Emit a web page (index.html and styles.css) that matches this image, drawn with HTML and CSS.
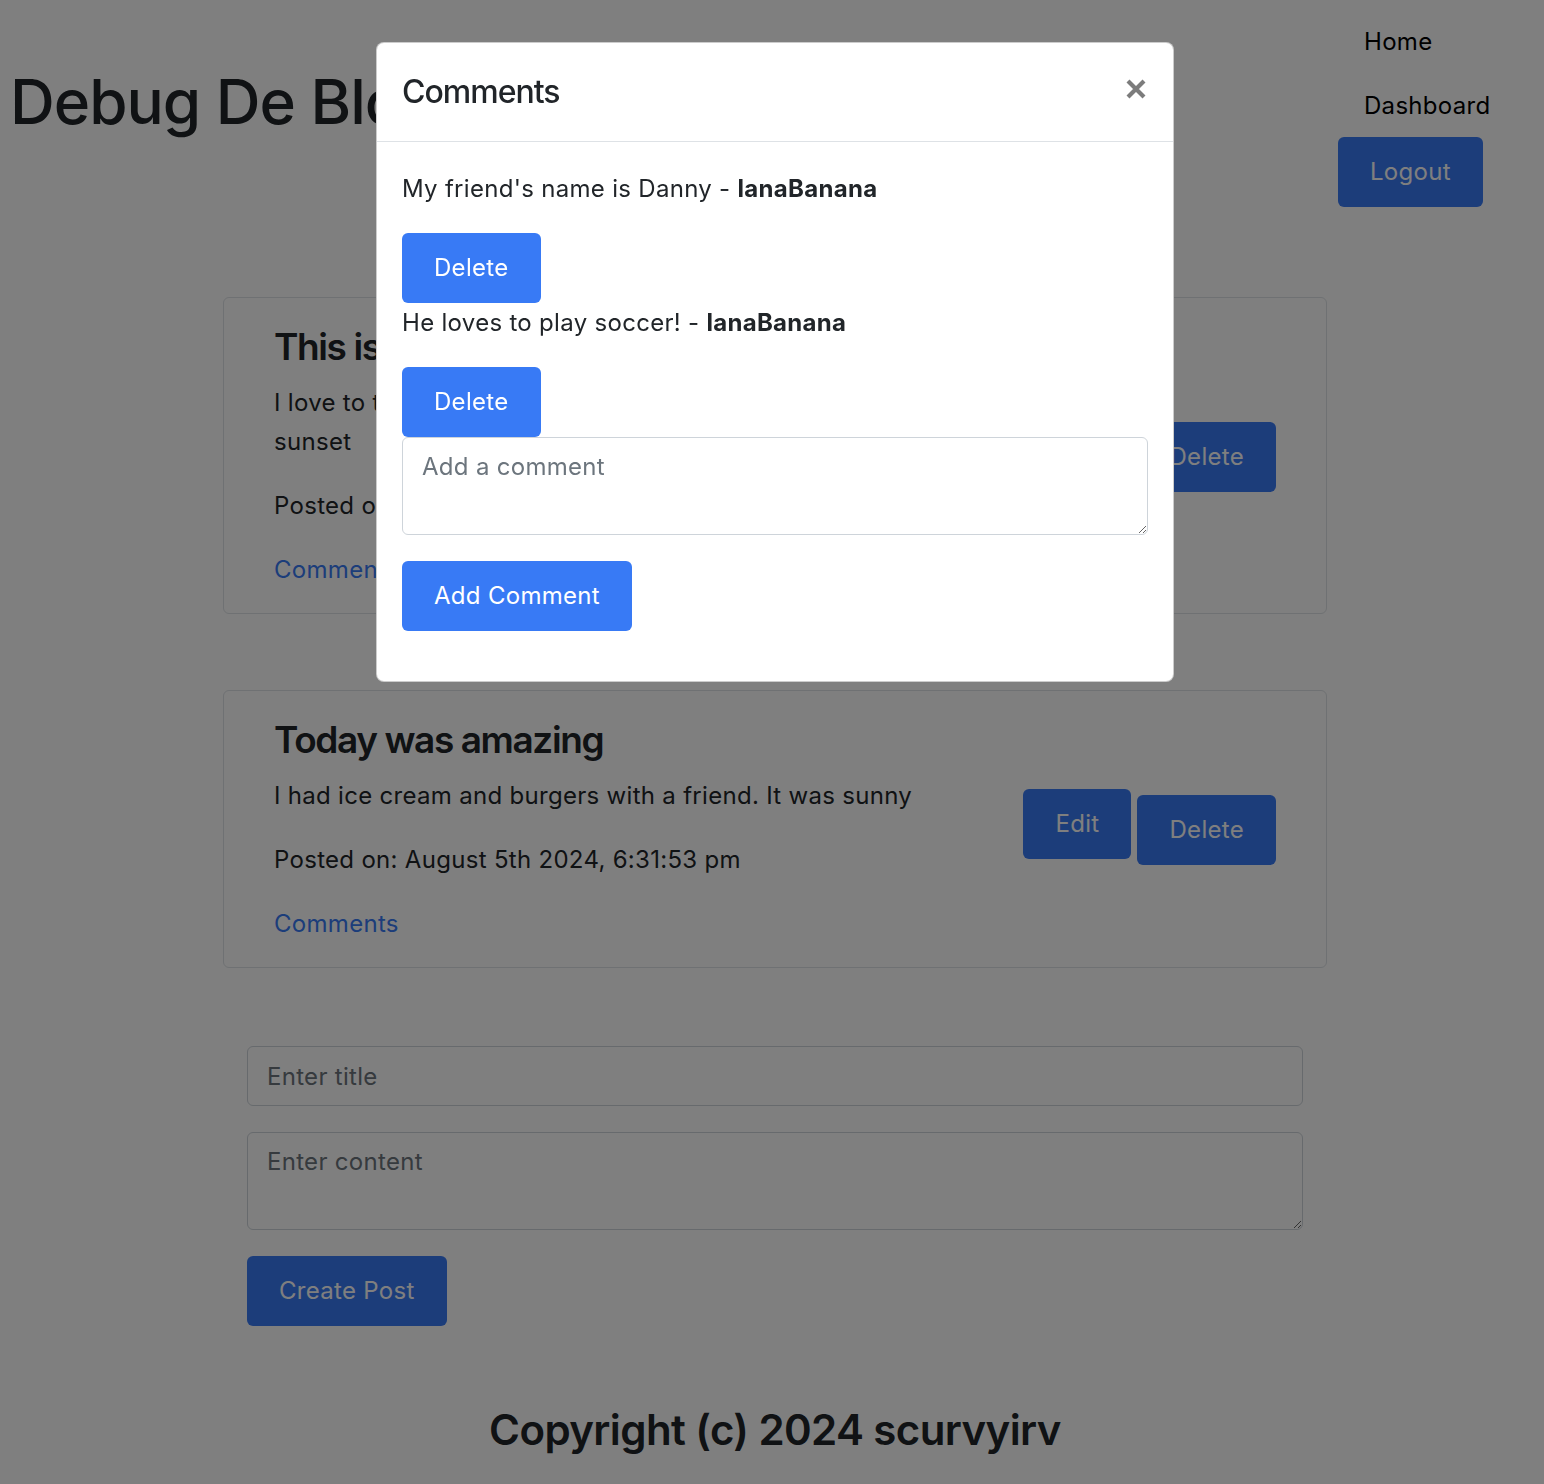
FILE: index.html
```html
<!DOCTYPE html>
<html lang="en">
<head>
<meta charset="utf-8">
<title>Debug De Blog</title>
<link rel="stylesheet" href="styles.css">
</head>
<body>
<div class="page">
  <header class="site-header">
    <h1 class="brand">Debug De Blog</h1>
    <nav class="nav">
      <a class="nav-link" href="#">Home</a>
      <a class="nav-link" href="#">Dashboard</a>
      <button class="btn">Logout</button>
    </nav>
  </header>

  <main class="main">
    <article class="post-card">
      <div class="post-body">
        <h2 class="post-title">This is my first post</h2>
        <p class="post-text">I love to take walks on the beach and watch the<br>sunset</p>
        <p class="post-text">Posted on: August 5th 2024, 6:25:10 pm</p>
        <a class="post-link" href="#">Comments</a>
      </div>
      <div class="post-actions">
        <button class="btn btn-edit">Edit</button>
        <button class="btn">Delete</button>
      </div>
    </article>

    <article class="post-card">
      <div class="post-body">
        <h2 class="post-title">Today was amazing</h2>
        <p class="post-text">I had ice cream and burgers with a friend. It was sunny</p>
        <p class="post-text">Posted on: August 5th 2024, 6:31:53 pm</p>
        <a class="post-link" href="#">Comments</a>
      </div>
      <div class="post-actions">
        <button class="btn btn-edit">Edit</button>
        <button class="btn">Delete</button>
      </div>
    </article>

    <form class="new-post">
      <input class="field" type="text" placeholder="Enter title">
      <textarea class="field field-area" placeholder="Enter content"></textarea>
      <button class="btn" type="button">Create Post</button>
    </form>
  </main>

  <footer class="site-footer">Copyright (c) 2024 scurvyirv</footer>
</div>

<div class="backdrop"></div>

<div class="modal-wrap">
  <div class="modal">
    <div class="modal-header">
      <h5 class="modal-title">Comments</h5>
      <button class="close" type="button" aria-label="Close">
        <svg width="20" height="20" viewBox="0 0 20 20"><path d="M2 2 L18 18 M18 2 L2 18" stroke="currentColor" stroke-width="4.2" fill="none"/></svg>
      </button>
    </div>
    <div class="modal-body">
      <p class="comment">My friend's name is Danny - <strong>lanaBanana</strong></p>
      <button class="btn">Delete</button>
      <p class="comment">He loves to play soccer! - <strong>lanaBanana</strong></p>
      <button class="btn">Delete</button>
      <form class="comment-form">
        <textarea class="field field-area" placeholder="Add a comment"></textarea>
        <button class="btn" type="button">Add Comment</button>
      </form>
    </div>
  </div>
</div>
</body>
</html>
```

FILE: styles.css
```css
* { box-sizing: border-box; }

html, body {
  margin: 0;
  padding: 0;
}

body {
  font-family: Inter, "Noto Sans", sans-serif;
  font-size: 24px;
  line-height: 39px;
  letter-spacing: 0.3px;
  color: #212529;
  background: #fff;
  overflow: hidden;
}

.page {
  padding-left: 6px;
}

/* header */
.site-header {
  display: flex;
  justify-content: space-between;
  align-items: flex-start;
  height: 207px;
}

.brand {
  margin: 64px 0 0 4px;
  font-size: 62px;
  line-height: 75px;
  font-weight: 500;
  letter-spacing: -1px;
  white-space: nowrap;
}

.nav {
  width: 150px;
  margin-right: 56px;
  padding-top: 24px;
  display: flex;
  flex-direction: column;
  align-items: flex-start;
}

.nav-link {
  display: block;
  padding-left: 26px;
  line-height: 36px;
  color: #000;
  text-decoration: none;
}

.nav-link + .nav-link {
  margin-top: 28px;
}

.nav .btn {
  margin-top: 13px;
}

/* buttons */
.btn {
  display: inline-block;
  font-family: inherit;
  font-size: 24px;
  line-height: 36px;
  letter-spacing: 0.3px;
  padding: 17px 32px;
  color: #fff;
  background: #387af5;
  border: 0;
  border-radius: 6px;
  cursor: pointer;
}

/* posts */
.main {
  width: 1104px;
  margin: 90px auto 0;
}

.post-card {
  display: flex;
  align-items: center;
  gap: 20px;
  padding: 26px 50px 24px;
  border: 1px solid #dee2e6;
  border-radius: 6px;
}

.post-card + .post-card {
  margin-top: 76px;
}

.post-body {
  flex: 1;
  min-width: 0;
}

.post-title {
  margin: 0 0 13px;
  font-size: 37px;
  line-height: 46px;
  font-weight: 600;
  letter-spacing: -1.4px;
}

.post-text {
  margin: 0 0 25px;
}

.post-link {
  color: #387af5;
  text-decoration: none;
}

.post-actions {
  display: flex;
  align-items: center;
  gap: 6px;
}

.btn-edit {
  margin-bottom: 12px;
}

/* new post form */
.new-post {
  margin: 78px 24px 0;
  display: flex;
  flex-direction: column;
  align-items: flex-start;
}

.field {
  display: block;
  width: 100%;
  height: 60px;
  padding: 12px 19px;
  font-family: inherit;
  font-size: 24px;
  line-height: 34px;
  letter-spacing: 0.3px;
  color: #212529;
  background: #fff;
  border: 1px solid #ced4da;
  border-radius: 6px;
  margin: 0 0 26px;
}

.field::placeholder {
  color: #6c757d;
}

.field-area {
  height: 98px;
  resize: vertical;
}

/* footer */
.site-footer {
  margin-top: 78px;
  text-align: center;
  font-size: 42px;
  line-height: 51px;
  font-weight: 600;
  letter-spacing: -0.6px;
}

/* modal */
.backdrop {
  position: fixed;
  inset: 0;
  background: rgba(0, 0, 0, 0.5);
}

.modal-wrap {
  position: fixed;
  inset: 0;
  padding: 42px 0 0 6px;
  display: flex;
  justify-content: center;
  align-items: flex-start;
}

.modal {
  width: 798px;
  background: #fff;
  border: 1px solid rgba(0, 0, 0, 0.2);
  border-radius: 8px;
}

.modal-header {
  display: flex;
  align-items: center;
  justify-content: space-between;
  height: 99px;
  padding: 0 27px 0 25px;
  border-bottom: 1px solid #dee2e6;
}

.modal-title {
  margin: 0;
  font-size: 32px;
  line-height: 38px;
  font-weight: 500;
  letter-spacing: -1px;
}

.close {
  display: flex;
  padding: 0;
  margin: 0 0 6px;
  background: none;
  border: 0;
  color: #7c7c7c;
  cursor: pointer;
}

.modal-body {
  padding: 27px 25px 24px;
}

.comment {
  margin: 0 0 25px;
}

.comment strong {
  font-weight: 700;
}

.modal-body > .btn {
  display: block;
}

.comment-form {
  margin-bottom: 26px;
}

.comment-form .field {
  margin: 0 0 26px;
}
```
